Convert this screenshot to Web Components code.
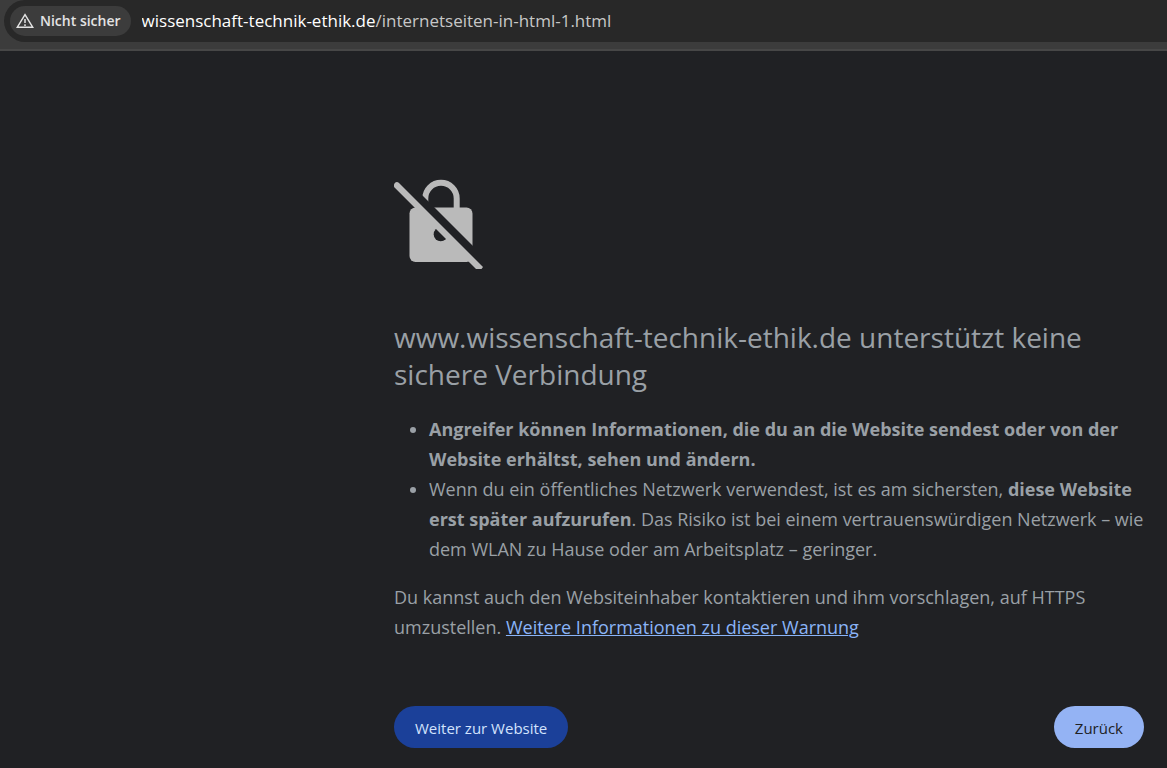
<!DOCTYPE html>
<html lang="de">
<head>
<meta charset="utf-8">
<meta name="viewport" content="width=device-width, initial-scale=1">
<title>Keine sichere Verbindung</title>
<style>
html { background: #202124; }
body { margin: 0; font-family: "Open Sans", "Noto Sans", sans-serif; color: #9aa0a6; }
</style>
</head>
<body>
<address-bar>
  <security-chip slot="status">Nicht sicher</security-chip>
  <span slot="host">wissenschaft-technik-ethik.de</span>
  <span slot="path">/internetseiten-in-html-1.html</span>
</address-bar>
<warning-page>
  <open-lock slot="icon"></open-lock>
  <span slot="title">www.wissenschaft-technik-ethik.de unterstützt keine sichere Verbindung</span>
  <risk-list slot="body"></risk-list>
  <owner-hint slot="body"></owner-hint>
  <pill-button slot="actions" variant="proceed">Weiter zur Website</pill-button>
  <pill-button slot="actions" variant="back">Zurück</pill-button>
</warning-page>
<script>
const define = (name, html) => {
  const template = document.createElement('template');
  template.innerHTML = html;
  customElements.define(name, class extends HTMLElement {
    constructor() {
      super();
      this.attachShadow({ mode: 'open' }).append(template.content.cloneNode(true));
    }
  });
};

define('address-bar', `
  <style>
    :host { display: block; background: #3c3c3c; border-bottom: 2px solid #474747; padding: 0 0 7px 4px; }
    .field { display: flex; align-items: center; gap: 11px; height: 42px; box-sizing: border-box; padding-left: 6px; background: #282828; border-radius: 21px 0 0 21px; }
    .url { display: flex; flex: 1; min-width: 0; overflow: hidden; white-space: nowrap; outline: none; font-size: 17px; line-height: 24px; color: #c7c7c7; }
    .host { color: #fff; }
  </style>
  <div class="field">
    <slot name="status"></slot>
    <div class="url" role="textbox" tabindex="0" aria-label="Adresse"><span class="host"><slot name="host"></slot></span><slot name="path"></slot></div>
  </div>`);

define('security-chip', `
  <style>
    :host { display: block; flex: none; }
    button { display: flex; align-items: center; gap: 6px; height: 30px; padding: 0 10px 0 6px; border: 0; border-radius: 15px; background: #3c3c3c; color: #e3e3e3; font: 600 14px/20px "Open Sans", "Noto Sans", sans-serif; cursor: pointer; }
    svg { display: block; }
  </style>
  <button type="button">
    <svg width="18" height="16" viewBox="0 0 18 16" fill="none" stroke="#e3e3e3" stroke-width="1.5" aria-hidden="true">
      <path d="M9 1.7 16.7 14.2H1.3Z"/><path d="M9 6v4M9 11.2v1.7"/>
    </svg>
    <slot></slot>
  </button>`);

define('warning-page', `
  <style>
    :host { display: grid; grid-template-columns: 1fr minmax(0, 750px) 23px; padding: 128px 0 20px; }
    main { grid-column: 2; }
    h1 { margin: 50px 0 21px; font-size: 28px; line-height: 37px; font-weight: 400; }
    .body { font-size: 18px; line-height: 30px; }
    .actions { display: flex; justify-content: space-between; margin-top: 64px; }
  </style>
  <main>
    <slot name="icon"></slot>
    <h1><slot name="title"></slot></h1>
    <div class="body"><slot name="body"></slot></div>
    <div class="actions"><slot name="actions"></slot></div>
  </main>`);

define('open-lock', `
  <style>
    :host { display: block; }
    svg { display: block; }
  </style>
  <svg width="90" height="90" viewBox="0 0 90 90" role="img" aria-label="Unsichere Verbindung">
    <mask id="cut" maskUnits="userSpaceOnUse" x="0" y="0" width="90" height="90">
      <path fill="#fff" d="M0 0H90V90H0Z"/>
      <path fill="#000" d="M0 -12 100 88V104L0 4Z"/>
      <circle cx="46.7" cy="55.2" r="7" fill="#000"/>
    </mask>
    <g mask="url(#cut)">
      <rect x="15.5" y="28.5" width="63" height="54.5" rx="6" fill="#bababa"/>
      <path d="M31.3 30V19.5a15.7 15.7 0 0 1 31.4 0V30" fill="none" stroke="#bababa" stroke-width="6"/>
    </g>
    <path d="M5 4 89 88 87.500 90H82L0.800 8.800Q-1 6.500 0.500 4.500 2.600 2 5 4Z" fill="#bababa"/>
  </svg>`);

define('risk-list', `
  <style>
    :host { display: block; }
    ul { margin: 0; padding-left: 35px; }
    b { font-weight: 700; }
  </style>
  <ul>
    <li><b>Angreifer können Informationen, die du an die Website sendest oder von der Website erhältst, sehen und ändern.</b></li>
    <li>Wenn du ein öffentliches Netzwerk verwendest, ist es am sichersten, <b>diese Website erst später aufzurufen</b>. Das Risiko ist bei einem vertrauenswürdigen Netzwerk – wie dem WLAN zu Hause oder am Arbeitsplatz – geringer.</li>
  </ul>`);

define('owner-hint', `
  <style>
    :host { display: block; }
    p { margin: 18px 0 0; }
    a { color: #8ab4f8; text-decoration: underline; }
  </style>
  <p>Du kannst auch den Websiteinhaber kontaktieren und ihm vorschlagen, auf HTTPS umzustellen. <a href="#mehr">Weitere Informationen zu dieser Warnung</a></p>`);

define('pill-button', `
  <style>
    :host { display: block; }
    button { height: 42px; padding: 2px 21px 0; border: 0; border-radius: 21px; background: #1b4099; color: #d3e3fd; font: 400 15px/20px "Open Sans", "Noto Sans", sans-serif; cursor: pointer; }
    :host([variant="back"]) button { background: #94b3f4; color: #202124; }
  </style>
  <button type="button"><slot></slot></button>`);
</script>
</body>
</html>
